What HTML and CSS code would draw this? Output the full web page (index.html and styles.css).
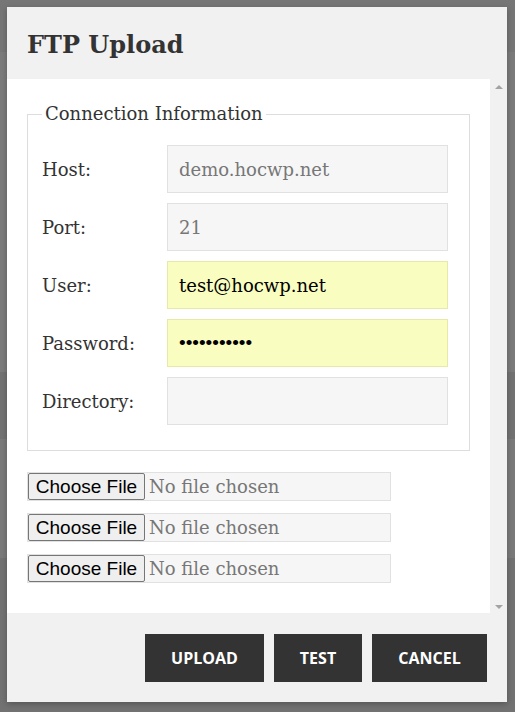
FILE: index.html
```html
<!DOCTYPE html>
<html lang="en">
<head>
<meta charset="utf-8">
<title>FTP Upload</title>
<link rel="stylesheet" href="styles.css">
</head>
<body>
<div class="dialog">
  <div class="dialog-title">FTP Upload</div>
  <div class="dialog-body">
    <div class="content">
      <fieldset class="conn">
        <legend>Connection Information</legend>
        <div class="row">
          <label class="lbl" for="host">Host:</label>
          <input class="field muted" id="host" type="text" value="demo.hocwp.net" readonly>
        </div>
        <div class="row">
          <label class="lbl" for="port">Port:</label>
          <input class="field muted" id="port" type="text" value="21" readonly>
        </div>
        <div class="row">
          <label class="lbl" for="user">User:</label>
          <input class="field filled" id="user" type="text" value="test@hocwp.net">
        </div>
        <div class="row">
          <label class="lbl" for="pass">Password:</label>
          <input class="field filled pw" id="pass" type="password" value="12345678901">
        </div>
        <div class="row">
          <label class="lbl" for="dir">Directory:</label>
          <input class="field" id="dir" type="text" value="">
        </div>
      </fieldset>
      <div class="files">
        <label class="file"><span class="file-btn">Choose File</span><span class="file-name">No file chosen</span></label>
        <label class="file"><span class="file-btn">Choose File</span><span class="file-name">No file chosen</span></label>
        <label class="file"><span class="file-btn">Choose File</span><span class="file-name">No file chosen</span></label>
      </div>
    </div>
    <div class="scrollbar">
      <span class="arrow up"></span>
      <span class="arrow down"></span>
    </div>
  </div>
  <div class="dialog-footer">
    <button class="btn btn-upload" type="button">Upload</button>
    <button class="btn btn-test" type="button">Test</button>
    <button class="btn btn-cancel" type="button">Cancel</button>
  </div>
</div>
</body>
</html>
```

FILE: styles.css
```css
html, body {
  margin: 0;
  padding: 0;
}

body {
  width: 515px;
  height: 712px;
  overflow: hidden;
  background: linear-gradient(to bottom,
    #767676 0, #767676 52px,
    #7b7b7b 52px, #7b7b7b 372px,
    #727272 372px, #727272 439px,
    #7a7a7a 439px, #7a7a7a 558px,
    #727272 558px, #727272 100%);
  font-family: "DejaVu Serif", "Liberation Serif", serif;
  color: #333;
}

.dialog {
  position: absolute;
  left: 7px;
  top: 7px;
  width: 500px;
  height: 695px;
  background: #f1f1f1;
  display: flex;
  flex-direction: column;
  box-shadow: 0 2px 6px rgba(0, 0, 0, 0.25);
}

.dialog-title {
  height: 72px;
  flex: none;
  display: flex;
  align-items: center;
  padding-left: 20px;
  font-size: 24px;
  font-weight: bold;
  color: #333;
  box-sizing: border-box;
  padding-top: 2px;
}

.dialog-body {
  height: 534px;
  flex: none;
  display: flex;
}

.content {
  flex: 1;
  background: #fff;
  padding: 23px 20px 0 20px;
  overflow: hidden;
}

.scrollbar {
  width: 17px;
  flex: none;
  background: #f1f1f1;
  display: flex;
  flex-direction: column;
  justify-content: space-between;
  align-items: center;
  padding: 6px 0 4px;
}

.arrow {
  width: 0;
  height: 0;
  border-left: 4px solid transparent;
  border-right: 4px solid transparent;
}

.arrow.up {
  border-bottom: 4px solid #a3a3a3;
}

.arrow.down {
  border-top: 4px solid #a3a3a3;
}

.conn {
  margin: 0;
  border: 1px solid #ddd;
  padding: 19px 21px 25px 14px;
  display: flex;
  flex-direction: column;
  gap: 10px;
}

.conn legend {
  padding: 0 3px;
  margin-left: 0;
  font-size: 18px;
  line-height: 24px;
  color: #333;
}

.row {
  display: flex;
  align-items: center;
  height: 48px;
}

.lbl {
  width: 125px;
  flex: none;
  font-size: 18px;
  color: #333;
}

.field {
  flex: 1;
  height: 48px;
  box-sizing: border-box;
  border: 1px solid #e1e1e1;
  background: #f6f6f6;
  padding: 0 11px;
  font-family: "DejaVu Serif", "Liberation Serif", serif;
  font-size: 18px;
  color: #000;
  outline: none;
  margin: 0;
}

.field.muted {
  color: #777;
}

.field.filled {
  background: #fafdc0;
  border-color: #e8e8a8;
}

.field.pw {
  font-family: "Liberation Sans", Arial, sans-serif;
  font-size: 19px;
  letter-spacing: 0;
}

.files {
  margin-top: 21px;
  display: flex;
  flex-direction: column;
  gap: 12px;
}

.file {
  width: 364px;
  height: 29px;
  box-sizing: border-box;
  border: 1px solid #e1e1e1;
  background: #f6f6f6;
  display: flex;
  align-items: center;
}

.file-btn {
  width: 117px;
  height: 27px;
  box-sizing: border-box;
  border: 1px solid #767676;
  border-radius: 2px;
  background: #efefef;
  font-family: "Liberation Sans", Arial, sans-serif;
  font-size: 19px;
  color: #000;
  display: flex;
  align-items: center;
  justify-content: center;
  flex: none;
}

.file-name {
  padding-left: 4px;
  font-size: 18px;
  color: #777;
  white-space: nowrap;
}

.dialog-footer {
  flex: 1;
  display: flex;
  justify-content: flex-end;
  align-items: flex-start;
  gap: 10px;
  padding: 21px 20px 0 0;
}

.btn {
  height: 48px;
  border: 0;
  margin: 0;
  background: #333;
  color: #fff;
  font-family: "Open Sans", "Liberation Sans", sans-serif;
  font-weight: bold;
  font-size: 16px;
  text-transform: uppercase;
  padding: 0;
  cursor: pointer;
}

.btn-upload { width: 119px; }
.btn-test { width: 88px; }
.btn-cancel { width: 115px; }
```
